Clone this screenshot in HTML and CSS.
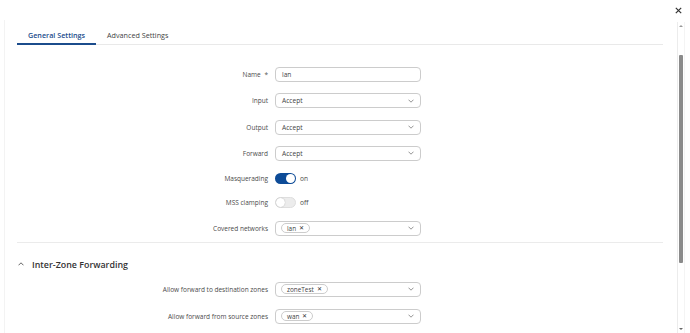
FILE: index.html
```html
<!DOCTYPE html>
<html lang="en">
<head>
<meta charset="utf-8">
<title>Zone settings</title>
<link rel="stylesheet" href="styles.css">
</head>
<body>
<div class="modal">
  <div class="topbar">
    <button class="close" aria-label="Close">
      <svg width="7" height="7" viewBox="0 0 7 7"><path d="M0.8 0.8 L6.2 6.2 M6.2 0.8 L0.8 6.2" stroke="#333" stroke-width="1.2" fill="none"/></svg>
    </button>
  </div>
  <div class="main">
    <div class="content">
      <div class="tabs">
        <div class="tab active">General Settings</div>
        <div class="tab">Advanced Settings</div>
      </div>

      <div class="form general">
        <div class="row">
          <div class="lbl">Name <span class="req">*</span></div>
          <div class="field text">lan</div>
        </div>
        <div class="row">
          <div class="lbl">Input</div>
          <div class="field select"><span>Accept</span><svg class="chev" width="6" height="4" viewBox="0 0 6 4"><path d="M0.5 0.7 L3 3.2 L5.5 0.7" stroke="#888" stroke-width="0.9" fill="none"/></svg></div>
        </div>
        <div class="row">
          <div class="lbl">Output</div>
          <div class="field select"><span>Accept</span><svg class="chev" width="6" height="4" viewBox="0 0 6 4"><path d="M0.5 0.7 L3 3.2 L5.5 0.7" stroke="#888" stroke-width="0.9" fill="none"/></svg></div>
        </div>
        <div class="row">
          <div class="lbl">Forward</div>
          <div class="field select"><span>Accept</span><svg class="chev" width="6" height="4" viewBox="0 0 6 4"><path d="M0.5 0.7 L3 3.2 L5.5 0.7" stroke="#888" stroke-width="0.9" fill="none"/></svg></div>
        </div>
        <div class="row short">
          <div class="lbl">Masquerading</div>
          <div class="switch-wrap"><span class="switch on"><span class="knob"></span></span><span class="state">on</span></div>
        </div>
        <div class="row short">
          <div class="lbl">MSS clamping</div>
          <div class="switch-wrap"><span class="switch off"><span class="knob"></span></span><span class="state">off</span></div>
        </div>
        <div class="row">
          <div class="lbl">Covered networks</div>
          <div class="field select"><span class="chip">lan <span class="x">✕</span></span><svg class="chev" width="6" height="4" viewBox="0 0 6 4"><path d="M0.5 0.7 L3 3.2 L5.5 0.7" stroke="#888" stroke-width="0.9" fill="none"/></svg></div>
        </div>
      </div>

      <div class="divider"></div>

      <div class="section-head">
        <svg class="up" width="6" height="4" viewBox="0 0 6 4"><path d="M0.5 3.3 L3 0.8 L5.5 3.3" stroke="#555" stroke-width="0.9" fill="none"/></svg>
        <span>Inter-Zone Forwarding</span>
      </div>

      <div class="form zones">
        <div class="row">
          <div class="lbl">Allow forward to destination zones</div>
          <div class="field select"><span class="chip">zoneTest <span class="x">✕</span></span><svg class="chev" width="6" height="4" viewBox="0 0 6 4"><path d="M0.5 0.7 L3 3.2 L5.5 0.7" stroke="#888" stroke-width="0.9" fill="none"/></svg></div>
        </div>
        <div class="row">
          <div class="lbl">Allow forward from source zones</div>
          <div class="field select"><span class="chip">wan <span class="x">✕</span></span><svg class="chev" width="6" height="4" viewBox="0 0 6 4"><path d="M0.5 0.7 L3 3.2 L5.5 0.7" stroke="#888" stroke-width="0.9" fill="none"/></svg></div>
        </div>
      </div>
    </div>

    <div class="scrollbar">
      <span class="arrow-up"></span>
      <div class="track"><div class="thumb"></div></div>
      <span class="arrow-down"></span>
    </div>
  </div>
</div>
</body>
</html>
```

FILE: styles.css
```css
* { box-sizing: border-box; }

html, body {
  margin: 0;
  padding: 0;
  background: #ffffff;
}

body {
  font-family: "Open Sans", "Noto Sans", sans-serif;
  color: #4a4a4a;
  width: 690px;
  height: 333px;
  overflow: hidden;
}

.modal {
  width: 690px;
  height: 333px;
  display: flex;
  flex-direction: column;
}

.topbar {
  height: 20px;
  display: flex;
  justify-content: flex-end;
  align-items: center;
  padding-right: 8px;
}

.close {
  border: 0;
  background: transparent;
  padding: 0;
  width: 7px;
  height: 7px;
  display: flex;
}

.main {
  flex: 1;
  display: flex;
  min-height: 0;
}

.content {
  flex: 1;
  margin-left: 4px;
  border-left: 1px solid #f3f3f3;
  padding-left: 12px;
}

/* tabs */
.tabs {
  display: flex;
  border-bottom: 1px solid #e9e9e9;
}

.tab {
  padding: 10px 11px 3px;
  line-height: 10px;
  font-size: 7.2px;
  color: #3f3f3f;
  border-bottom: 2px solid transparent;
  margin-bottom: -1px;
}

.tab.active {
  color: #1b4c8c;
  font-weight: 600;
  border-bottom-color: #1b4c8c;
}

/* form */
.form {
  display: flex;
  flex-direction: column;
  gap: 11.3px;
}

.form.general {
  padding-top: 22px;
}

.row {
  display: flex;
  align-items: center;
  gap: 7px;
  height: 15px;
}

.row.short {
  height: 13px;
}

.lbl {
  width: 251px;
  text-align: right;
  font-size: 6.5px;
  color: #4a4a4a;
  white-space: nowrap;
}

.req {
  color: #555;
  margin-left: 2px;
}

.field {
  width: 146px;
  height: 15px;
  border: 1px solid #cccccc;
  border-radius: 4px;
  display: flex;
  align-items: center;
  padding: 0 6px;
  font-size: 6.6px;
  color: #3f3f3f;
}

.select {
  justify-content: space-between;
  padding-right: 6px;
}

.chev {
  display: block;
}

.chip {
  display: inline-flex;
  align-items: center;
  gap: 3px;
  height: 10px;
  padding: 0 5px 0 5px;
  border: 1px solid #cccccc;
  border-radius: 6px;
  margin-left: -1px;
  font-size: 6.4px;
  color: #3f3f3f;
}

.x {
  font-size: 5.6px;
  color: #333;
}

/* switches */
.switch-wrap {
  display: flex;
  align-items: center;
  gap: 4px;
}

.switch {
  width: 21px;
  height: 11px;
  border-radius: 6px;
  display: flex;
  align-items: center;
  padding: 0 1px;
}

.switch.on {
  background: #0d4b97;
  justify-content: flex-end;
}

.switch.off {
  background: #ececec;
  border: 1px solid #dedede;
  padding: 0;
}

.knob {
  width: 9px;
  height: 9px;
  border-radius: 50%;
  background: #fff;
}

.switch.off .knob {
  box-shadow: 0 0 1px rgba(0, 0, 0, 0.35);
}

.state {
  font-size: 6.6px;
  color: #4a4a4a;
}

/* section */
.divider {
  height: 1px;
  background: #ebebeb;
  margin-top: 6px;
}

.section-head {
  display: flex;
  align-items: center;
  gap: 8px;
  margin-top: 16px;
  padding-left: 1px;
  height: 12px;
  font-size: 8.9px;
  font-weight: 600;
  color: #333;
}

.up {
  display: block;
  margin-top: -2px;
}

.form.zones {
  padding-top: 11px;
  gap: 12px;
}

/* scrollbar */
.scrollbar {
  width: 8px;
  margin: 2px 5px 0 14px;
  border-left: 1px solid #ececec;
  border-right: 1px solid #f4f4f4;
  display: flex;
  flex-direction: column;
  align-items: center;
  padding: 3px 0 3px;
}

.arrow-up {
  width: 0;
  height: 0;
  border-left: 2px solid transparent;
  border-right: 2px solid transparent;
  border-bottom: 2px solid #999;
}

.arrow-down {
  width: 0;
  height: 0;
  border-left: 2px solid transparent;
  border-right: 2px solid transparent;
  border-top: 2px solid #666;
}

.track {
  flex: 1;
  width: 100%;
  display: flex;
  justify-content: center;
}

.thumb {
  margin-top: 28px;
  width: 4px;
  height: 208px;
  background: #8b8b8b;
  border-radius: 1px;
}
```
